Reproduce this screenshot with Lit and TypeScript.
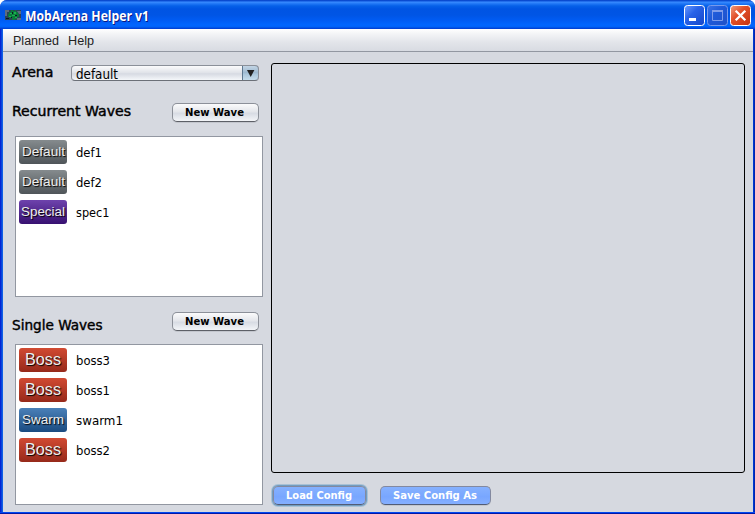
import { LitElement, html, css, svg } from "lit";
import { customElement, property } from "lit/decorators.js";

/** A single line of text fitted to a fixed advance width. */
@customElement("fit-text")
class FitText extends LitElement {
  @property() text = "";
  @property({ type: Number }) w = 40;
  @property({ type: Number }) base = 12;
  static styles = css`
    :host { display: block; flex: none; }
    svg { display: block; overflow: visible; }
    text { fill: currentColor; stroke: currentColor; stroke-width: var(--weight, 0); }
  `;
  render() {
    return html`<svg width=${this.w} height="16">${svg`<text x="0" y=${this.base} textLength=${this.w} lengthAdjust="spacingAndGlyphs">${this.text}</text>`}</svg>`;
  }
}

interface Wave { kind: string; kw: number; name: string; w: number; }

const recurrent: Wave[] = [
  { kind: "Default", kw: 43, name: "def1", w: 26 },
  { kind: "Default", kw: 43, name: "def2", w: 26 },
  { kind: "Special", kw: 44, name: "spec1", w: 33.5 },
];
const single: Wave[] = [
  { kind: "Boss", kw: 36, name: "boss3", w: 34 },
  { kind: "Boss", kw: 36, name: "boss1", w: 34 },
  { kind: "Swarm", kw: 42, name: "swarm1", w: 47 },
  { kind: "Boss", kw: 36, name: "boss2", w: 34 },
];

@customElement("wave-list")
class WaveList extends LitElement {
  @property({ attribute: false }) waves: Wave[] = [];
  static styles = css`
    :host { display: block; box-sizing: border-box; width: 248px; height: 161px; background: #fff; border: 1px solid #9297a1; padding: 3px; }
    .row { display: flex; height: 24px; margin-bottom: 6px; color: #000; font: 13px "DejaVu Sans Condensed", "DejaVu Sans", sans-serif; }
    .badge { width: 48px; height: 24px; border-radius: 3px; display: flex; justify-content: center; margin-right: 9px; color: #eee; font: 13px "Liberation Sans", sans-serif; text-shadow: 1px 1px 1px #000; }
    .name { margin-top: 1px; }
    .Default { background: linear-gradient(#858b8e, #4f5559); }
    .Special { background: linear-gradient(#6e43ad, #371071); }
    .Boss { background: linear-gradient(#d14a32, #96291a); font-size: 16px; }
    .Swarm { background: linear-gradient(#4a80b8, #1a4b80); }
  `;
  render() {
    return this.waves.map((v) => html`<div class="row">
      <div class="badge ${v.kind}"><fit-text .text=${v.kind} .w=${v.kw} .base=${v.kind === "Boss" ? 17 : 16}></fit-text></div>
      <fit-text class="name" .text=${v.name} .w=${v.w} .base=${16}></fit-text>
    </div>`);
  }
}

@customElement("app-root")
class AppRoot extends LitElement {
  static styles = css`
    :host { display: block; width: 755px; height: 514px; overflow: hidden; background: #fff; }
    * { box-sizing: border-box; }
    .window { width: 755px; height: 514px; display: flex; flex-direction: column; border-radius: 7px 7px 0 0; overflow: hidden; background: linear-gradient(90deg, #0019cf 0, #0831d9 1px, #0855dd 2px, #166aee 3px, #0855dd 3px, #0855dd 753px, #0040e0 753px, #001ea0 755px); }
    .titlebar { height: 29px; flex: none; display: flex; align-items: flex-start; padding: 5px 4px 0 5px; color: #fff;
      background: linear-gradient(#0a46c8 0, #0a4fd8 1px, #3a8cff 2px, #1c74f4 4px, #0560e8 6px, #0054e3 9px, #0055e5 15px, #005bf2 20px, #0066ff 25px, #0062f8 27px, #0048d8 28px, #003dd7 29px); }
    .logo { margin-top: 5px; display: block; }
    .title { margin: 0 auto 0 3.5px; font: bold 13.5px "Open Sans", "Noto Sans", sans-serif; text-shadow: 1px 1px 0 #0a1883; }
    .controls { display: flex; gap: 2px; }
    .controls svg { display: block; }
    .menubar { height: 23px; flex: none; margin: 0 2px 0 3px; display: flex; gap: 9px; padding: 4px 10px; color: #222; font: 12px "Liberation Sans", sans-serif; background: linear-gradient(#fff 0, #f3f4f6 5px, #e3e5ea 13px, #d8dbe2 22px); border-bottom: 1px solid #9297a1; }
    .content { height: 460px; flex: none; margin: 0 2px 0 3px; background: #d6d9e0; display: flex; }
    .footer { height: 2px; background: linear-gradient(#0048f0 50%, #0019a8 50%); }
    .left { width: 268px; padding-left: 12px; }
    .bar { display: flex; align-items: flex-start; justify-content: space-between; width: 244px; }
    .heading { --weight: 0.4px; font: 14px "DejaVu Sans Condensed", "DejaVu Sans", sans-serif; color: #000; margin-left: -3px; }
    .arena { padding-top: 13px; height: 51px; }
    .rec { height: 33px; }
    .sing { height: 47px; padding-top: 15px; }
    .combo { width: 188px; height: 16px; border: 1px solid #8b9099; border-bottom-color: #6c7078; border-radius: 4px; display: flex; justify-content: space-between; background: linear-gradient(#fbfbfc, #dfe2e8 50%, #d6dae2 55%, #f5f7fa); overflow: hidden; padding-left: 3.5px; font: 14px "DejaVu Sans Condensed", "DejaVu Sans", sans-serif; }
    .arrow { width: 17px; height: 16px; margin: -1px -1px 0 0; border: 1px solid #5d7890; border-radius: 0 4px 4px 0; background: linear-gradient(#c3d5e5, #9cb8cf 50%, #a9c5da 55%, #c6ddec); }
    .arrow svg { display: block; }
    .btn { display: flex; justify-content: center; height: 19px; border: 1px solid #8c9099; border-bottom-color: #5d6067; border-radius: 5px; background: linear-gradient(#fbfbfc, #e4e6eb 45%, #d8dce4 55%, #f3f5f8); box-shadow: 0 1px 0 #c3c6cd; font: bold 11px "DejaVu Sans Condensed", "DejaVu Sans", sans-serif; color: #000; }
    .btn fit-text { margin-left: -2px; }
    .new { width: 87px; }
    .blue { color: #fff; background: linear-gradient(#86b1ff, #7aa8ff 50%, #78a6ff 55%, #85afff); border-color: #8389a0; border-bottom-color: #515c76; }
    .right { padding-top: 11px; }
    .panel { width: 474px; height: 410px; border: 1px solid #000; border-radius: 3px; }
    .actions { display: flex; gap: 14px; padding: 13px 0 0 2px; }
    .load { width: 93px; box-shadow: 0 0 0 1px #739dbf, 0 0 0 2px #a9c1d6; }
    .save { width: 111px; }
  `;

  private t(text: string, w: number, base: number, cls = "") {
    return html`<fit-text class=${cls} .text=${text} .w=${w} .base=${base}></fit-text>`;
  }

  private control(kind: "min" | "max" | "close") {
    const id = "g" + kind;
    const c = { min: ["#6b9cff", "#2862e8", "#1646c8"], max: ["#3b74e8", "#205ad9", "#1f50c8"], close: ["#f0a080", "#e2512a", "#c43210"] }[kind];
    const glyph = {
      min: svg`<rect x="5" y="13" width="7" height="3" fill="#fff"/>`,
      max: svg`<path d="M5.5 6v9.5h10V6" fill="none" stroke="#7f9cea"/><path d="M5 6h11" stroke="#7f9cea" stroke-width="2"/>`,
      close: svg`<path d="M5.7 5.7l9.6 9.6M15.3 5.7l-9.6 9.6" stroke="#fff" stroke-width="2.3"/>`,
    }[kind];
    return html`<svg width="21" height="21">
      <defs><linearGradient id=${id} x1="0" y1="0" x2="1" y2="1"><stop offset="0" stop-color=${c[0]}/><stop offset=".4" stop-color=${c[1]}/><stop offset="1" stop-color=${c[2]}/></linearGradient></defs>
      <rect x=".5" y=".5" width="20" height="20" rx="3" fill="url(#${id})" stroke=${kind === "max" ? "#7799ec" : "#fff"}/>
      ${glyph}</svg>`;
  }

  render() {
    return html`<div class="window">
      <div class="titlebar">
        <svg class="logo" width="16" height="10"><rect width="16" height="10" fill="#2a4258"/><path d="M0 0h4v2H2v4H0zM12 1h4v3h-2zM12 8h4v2h-4z" fill="#5c6c80"/><path d="M4 2h2V0h2v1h2V0h1v2h2v2h1v3h-2v2h-2v1H7V8H5V7H3V4h1z" fill="#0a7a3c"/><path d="M5 3h2v1H5zM9 2h2v2H9zM7 5h3v1H7zM4 6h2v1H4zM10 7h2v1h-2z" fill="#18b04c"/><path d="M7 2h1v2H7zM10 5h2v1h-2zM6 7h1v1H6zM1 8h3v1H1z" fill="#071c20"/></svg>
        ${this.t("MobArena Helper v1", 124, 16, "title")}
        <div class="controls">${this.control("min")}${this.control("max")}${this.control("close")}</div>
      </div>
      <div class="menubar">${this.t("Planned", 46, 12)}${this.t("Help", 26, 12)}</div>
      <div class="content">
        <div class="left">
          <div class="bar arena">${this.t("Arena", 41.5, 12, "heading")}
            <div class="combo">${this.t("default", 42, 13)}<div class="arrow"><svg width="15" height="14"><path d="M4 4h7.4L7.7 11z" fill="#222"/></svg></div></div>
          </div>
          <div class="bar rec">${this.t("Recurrent Waves", 119, 13, "heading")}<div class="btn new">${this.t("New Wave", 59, 12)}</div></div>
          <wave-list .waves=${recurrent}></wave-list>
          <div class="bar sing">${this.t("Single Waves", 90.5, 18, "heading")}<div class="btn new">${this.t("New Wave", 59, 12)}</div></div>
          <wave-list .waves=${single}></wave-list>
        </div>
        <div class="right">
          <div class="panel"></div>
          <div class="actions"><div class="btn blue load">${this.t("Load Config", 66, 12)}</div><div class="btn blue save">${this.t("Save Config As", 84, 12)}</div></div>
        </div>
      </div>
      <div class="footer"></div>
    </div>`;
  }
}
